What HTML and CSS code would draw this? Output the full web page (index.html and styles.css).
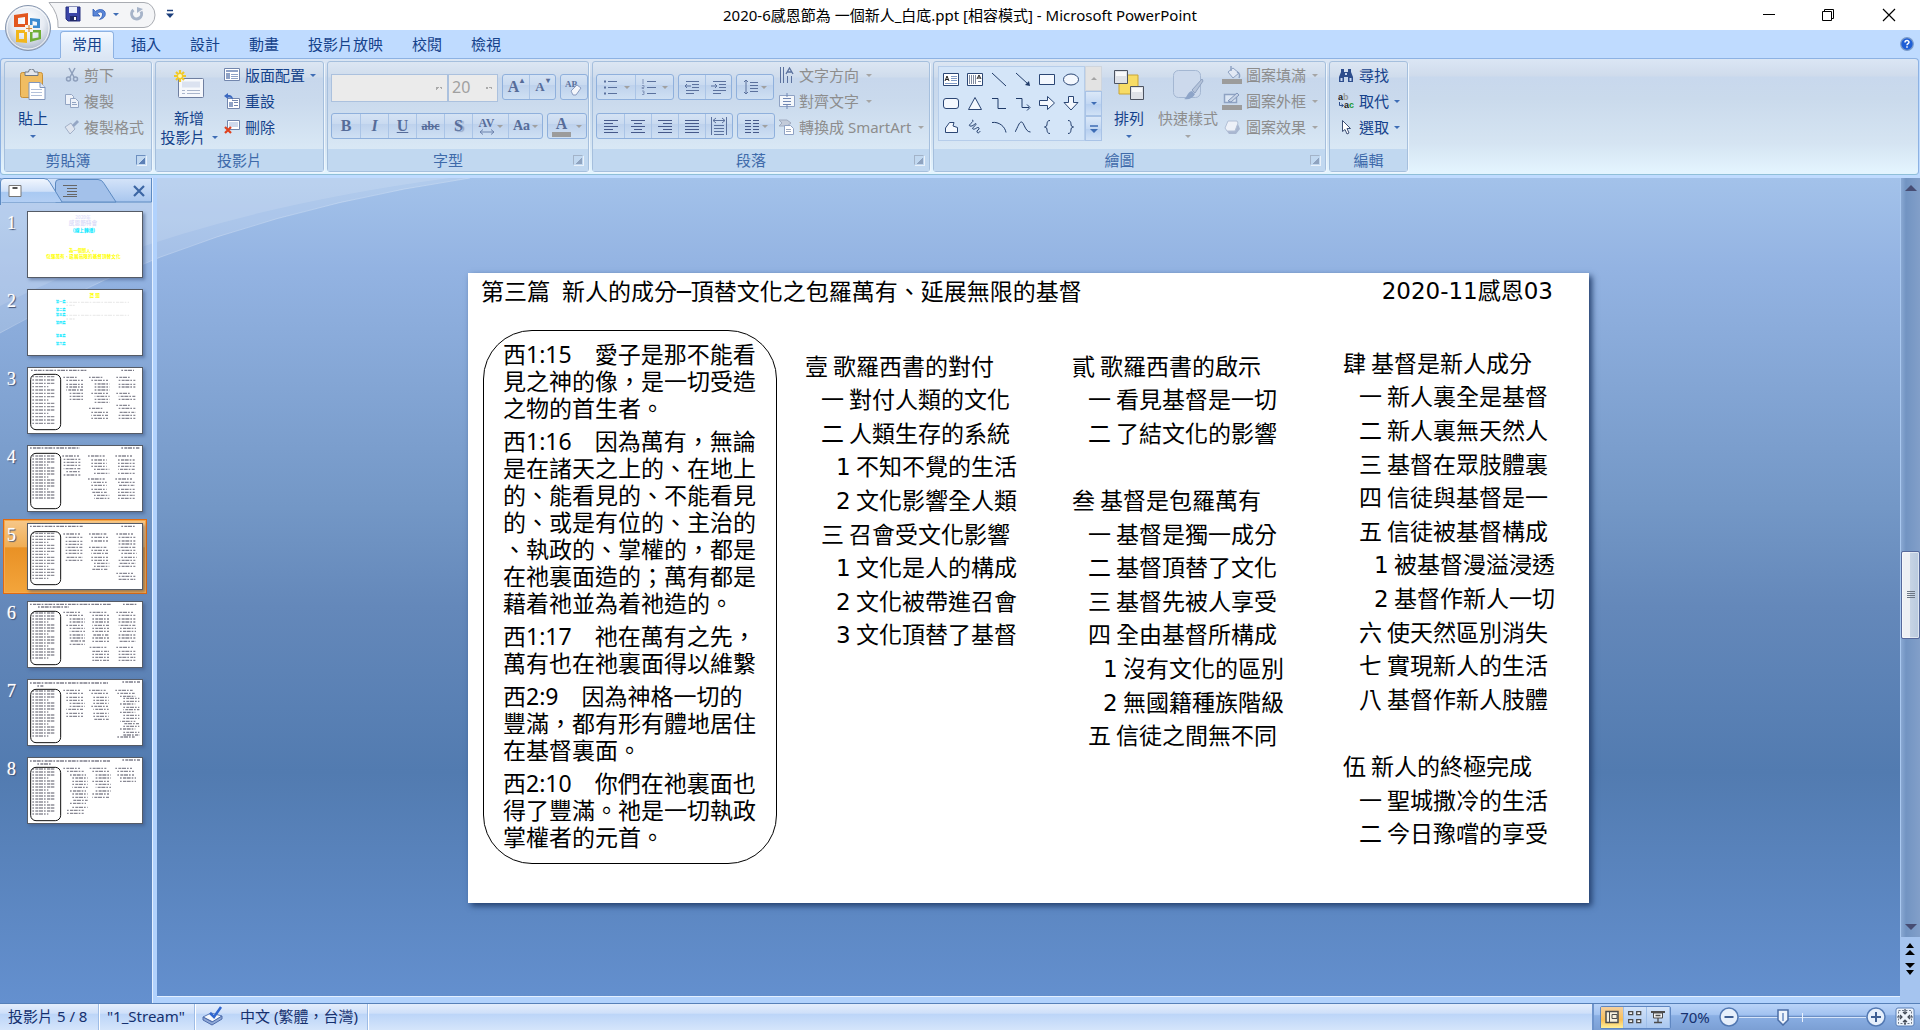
FILE: index.html
```html
<!DOCTYPE html>
<html lang="zh-Hant">
<head>
<meta charset="utf-8">
<title>2020-6感恩節為 一個新人_白底.ppt [相容模式] - Microsoft PowerPoint</title>
<link rel="stylesheet" href="styles.css">
</head>
<body>
<header class="titlebar">
  <div class="quick">
    <svg class="quick-shape" width="110" height="28" viewBox="0 0 110 28"><path d="M1 2.500H96a11 12.500 0 0 1 0 25H10Q11 14 1 2.500z" fill="#f4f5f7" stroke="#a9acb2"/></svg>
    <button class="ic save" aria-label="儲存檔案"><svg width="16" height="16" viewBox="0 0 16 16"><path d="M1 1h14v14H3L1 13z" fill="#3c46a8" stroke="#27307e"/><path d="M4 1h8v6H4z" fill="#eef2fb"/><path d="M5 10h7v5H5z" fill="#222a66"/><path d="M9 11h2v3H9z" fill="#fff"/></svg></button>
    <button class="ic undo" aria-label="復原"><svg width="16" height="16" viewBox="0 0 16 16"><path d="M2 3v7h7L6.500 7.500C9 5 12 6 11.500 9c-.3 2-1.500 3-3 4.500 4-1 6-3 5.800-6C14 3.500 8.500 2 4.500 5.500z" fill="#5a86d8" stroke="#2f5cb5" stroke-width=".8"/></svg></button>
    <button class="ic" aria-label="復原清單"><i class="caret"></i></button>
    <button class="ic redo" aria-label="取消復原"><svg width="16" height="16" viewBox="0 0 16 16"><path d="M4.500 4A5 5 0 1 0 12 5.500" fill="none" stroke="#a7b4c9" stroke-width="3"/><path d="M8 1v6l6-4z" fill="#a7b4c9"/></svg></button>
    <button class="ic custom" aria-label="自訂快速存取工具列"><svg width="8" height="10" viewBox="0 0 8 10"><path d="M1 1.500h6" stroke="#1c3f7c" stroke-width="1.500"/><path d="M0 4.500h8L4 9z" fill="#1c3f7c"/></svg></button>
  </div>
  <h1 class="title">2020-6感恩節為 一個新人_白底.ppt [相容模式] - Microsoft PowerPoint</h1>
  <div class="winctl">
    <button aria-label="最小化"><svg width="14" height="14" viewBox="0 0 14 14"><path d="M1 6.500h12" stroke="#000"/></svg></button>
    <button aria-label="還原"><svg width="14" height="14" viewBox="0 0 14 14" fill="none" stroke="#000"><path d="M1.500 3.500h9v9h-9zM3.500 3V1.500h9v9H11"/></svg></button>
    <button aria-label="關閉"><svg width="14" height="14" viewBox="0 0 14 14" stroke="#000" stroke-width="1.200"><path d="M1 1l12 12M13 1L1 13"/></svg></button>
  </div>
  <button class="office" aria-label="Office 按鈕">
    <svg width="48" height="48" viewBox="0 0 48 48">
      <defs><radialGradient id="orb" cx=".5" cy=".35" r=".65"><stop offset="0" stop-color="#fff"/><stop offset=".55" stop-color="#e6ebf3"/><stop offset="1" stop-color="#aab6c9"/></radialGradient></defs>
      <circle cx="24" cy="24" r="22.500" fill="url(#orb)" stroke="#8494ad"/>
      <circle cx="24" cy="24" r="21" fill="none" stroke="#fff" stroke-opacity=".8"/>
      <path d="M10 11l14-2v14H10zM14 14v6h7v-7z" fill="#e2571f" fill-rule="evenodd"/>
      <path d="M26 14l10 1v9H26zM28.500 17v4.500H33V18z" fill="#3b8ad0" fill-rule="evenodd"/>
      <path d="M12 26h11v13l-11-1zM15 29v6h5v-6z" fill="#f2b61c" fill-rule="evenodd"/>
      <path d="M26 26h11v9l-11 3zM28.500 28.500v6l6-1v-5z" fill="#6fae36" fill-rule="evenodd"/>
      <path d="M21 21h8v7h-8z" fill="#f7f3ea"/><path d="M22 24.500h6M25 21v7" stroke="#d98a3a" stroke-width="1.200"/>
    </svg>
  </button>
</header>

<nav class="tabs" aria-label="功能區索引標籤">
  <button class="tab on">常用</button><button class="tab">插入</button><button class="tab">設計</button><button class="tab">動畫</button><button class="tab">投影片放映</button><button class="tab">校閱</button><button class="tab">檢視</button>
  <button class="help" aria-label="說明"><svg width="14" height="14" viewBox="0 0 14 14"><circle cx="7" cy="7" r="6.300" fill="#1f5fd6" stroke="#7c9cc9" stroke-width="1.200"/><path d="M5 5.500C5 3 9 3 9 5.300 9 6.700 7 6.700 7 8.300M7 9.300v1.500" fill="none" stroke="#fff" stroke-width="1.500"/></svg></button>
</nav>

<div class="ribbon">
  <section class="group g-clip">
    <div class="body">
      <button class="big"><svg width="30" height="32" viewBox="0 0 30 32"><rect x="2.500" y="3.500" width="22" height="25" rx="2" fill="#f0bd62" stroke="#c78f38"/><path d="M7 6.500h13V3h-3.500a3 3 0 0 0-6 0H7z" fill="#e3e6ec" stroke="#6f7885"/><path d="M11 13.500h11l5 5v12H11z" fill="#fff" stroke="#7f95bd"/><path d="M22 13.500v5h5" fill="#dfe7f5" stroke="#7f95bd"/><path d="M13 20.500h11M13 23.500h11M13 26.500h11" stroke="#b3c1da"/></svg><span>貼上</span><i class="caret"></i></button>
      <div class="stack">
        <button class="sm off"><svg width="16" height="16" viewBox="0 0 16 16" fill="none" stroke="#8e9fbb" stroke-width="1.500"><path d="M5 1l5 9M11 1L6 10"/><circle cx="4.500" cy="12" r="2"/><circle cx="11.500" cy="12" r="2"/></svg>剪下</button>
        <button class="sm off"><svg width="16" height="16" viewBox="0 0 16 16" fill="#eef2f9" stroke="#93a5c3"><path d="M1.500 1.500h6l2 2v8h-8z"/><path d="M6.500 5.500h5l3 3v6h-8z"/><path d="M8 9.500h4M8 11.500h5"/></svg>複製</button>
        <button class="sm off"><svg width="16" height="16" viewBox="0 0 16 16"><path d="M1 8l6-4 4 6-5 5z" fill="#dfe5ef" stroke="#a3b1c8"/><path d="M8 6l5-5 2 2-5 5z" fill="#94a6c4"/></svg>複製格式</button>
      </div>
    </div>
    <footer><span>剪貼簿</span><button class="launch dark" aria-label="剪貼簿設定"></button></footer>
  </section>

  <section class="group g-slide">
    <div class="body">
      <button class="big wide"><svg width="32" height="32" viewBox="0 0 32 32"><rect x="5.500" y="9.500" width="25" height="19" rx="1" fill="#f6f8fc" stroke="#6f7fa0"/><path d="M9 12.500h18v6H9z" fill="#dbe2f0"/><path d="M9 21.500h3M14 21.500h13M9 24.500h3M14 24.500h13" stroke="#aab6cc"/><path d="M7 1v12M1 7h12M3 3l8 8M11 3l-8 8" stroke="#f2c928" stroke-width="2.200"/><circle cx="7" cy="7" r="2" fill="#fff8b8"/></svg><span>新增</span><span>投影片<i class="caret"></i></span></button>
      <div class="stack">
        <button class="sm"><svg width="16" height="16" viewBox="0 0 16 16"><path d="M.5 1.500h15v12H.5z" fill="#fff" stroke="#7286ad"/><path d="M2 3h12v2H2zM2 6h4v6H2z" fill="#8fa2c6"/><path d="M7 7.500h7M7 9.500h7M7 11.500h7" stroke="#8fa2c6"/></svg>版面配置<i class="caret"></i></button>
        <button class="sm"><svg width="16" height="16" viewBox="0 0 16 16"><path d="M3.500 5.500h12v10h-12z" fill="#fff" stroke="#7286ad"/><path d="M5 9h4v5H5z" fill="#8fa2c6"/><path d="M10 9.500h4M10 12.500h4M8 7.500h6" stroke="#7286ad"/><path d="M0 3l4-3v2c4 0 5 2 5 5-1-2-2-2.500-5-2.500V6z" fill="#3c69c0"/></svg>重設</button>
        <button class="sm"><svg width="16" height="16" viewBox="0 0 16 16"><path d="M3.500 1.500h12v9h-12z" fill="#fff" stroke="#7286ad"/><path d="M5 3h9v5H5z" fill="#cfd9ec"/><path d="M1 8l6 6M7 8l-6 6" stroke="#e0401c" stroke-width="2.200"/></svg>刪除</button>
      </div>
    </div>
    <footer><span>投影片</span></footer>
  </section>

  <section class="group g-font">
    <div class="body rows">
      <div class="row">
        <select class="combo face" aria-label="字型" disabled><option></option></select><select class="combo size" aria-label="字型大小" disabled><option>20</option></select>
        <div class="set"><button class="t26 ser" aria-label="放大字型">A<sup>▴</sup></button><button class="t26 ser smalla" aria-label="縮小字型">A<sup>▾</sup></button></div>
        <div class="set"><button class="t26" aria-label="清除格式"><svg width="18" height="18" viewBox="0 0 18 18"><text x="0" y="9" font-size="9" font-weight="bold" font-family="Liberation Serif, serif" fill="#5b719d">AB</text><path d="M6 13l6-6 4 3-5 7H8z" fill="#f4f6fb" stroke="#8a9cc0"/></svg></button></div>
      </div>
      <div class="row">
        <div class="set"><button class="t28 ser"><b>B</b></button><button class="t28 ser"><em>I</em></button><button class="t28 ser"><u>U</u></button><button class="t28 ser small"><s>abc</s></button><button class="t28 ser shade">S</button><button class="t36 ser small" aria-label="字元間距"><span class="av">AV<svg width="16" height="6" viewBox="0 0 16 6"><path d="M1 3h14M4 .5L1 3l3 2.500M12 .5L15 3l-3 2.500" fill="none" stroke="#6d83ad"/></svg></span><i class="caret"></i></button><button class="t34 ser mid">Aa<i class="caret"></i></button></div>
        <div class="set"><button class="t38 ser" aria-label="字型色彩"><span class="clr">A</span><i class="caret"></i></button></div>
      </div>
    </div>
    <footer><span>字型</span><button class="launch" aria-label="字型設定"></button></footer>
  </section>

  <section class="group g-para">
    <div class="body">
      <div class="rows">
        <div class="row">
          <div class="set"><button class="t38" aria-label="項目符號"><svg width="16" height="16" viewBox="0 0 16 16" stroke="#5b719d"><path d="M5 2.500h9M5 8.500h9M5 14.500h9"/><path d="M1 2.500h2M1 8.500h2M1 14.500h2" stroke-width="2"/></svg><i class="caret"></i></button><button class="t38" aria-label="編號"><svg width="16" height="16" viewBox="0 0 16 16" stroke="#5b719d"><path d="M6 2.500h9M6 8.500h9M6 14.500h9"/><path d="M2 0v5M1 6.500h2v2H1v1h2M1 12h2v3.500H1M2 13.500h1" fill="none" stroke="#8497bb"/></svg><i class="caret"></i></button></div>
          <div class="set"><button class="t26" aria-label="減少清單階層"><svg width="16" height="16" viewBox="0 0 16 16" stroke="#5b719d"><path d="M2 2.500h13M8 5.500h7M8 8.500h7M2 11.500h13M2 14.500h8"/><path d="M7 7H1l2-2M1 7l2 2" fill="none"/></svg></button><button class="t26" aria-label="增加清單階層"><svg width="16" height="16" viewBox="0 0 16 16" stroke="#5b719d"><path d="M2 2.500h13M8 5.500h7M8 8.500h7M2 11.500h13M2 14.500h8"/><path d="M0 7h6L4 5M6 7L4 9" fill="none"/></svg></button></div>
          <div class="set"><button class="t36" aria-label="行距"><svg width="16" height="16" viewBox="0 0 16 16" fill="none" stroke="#5b719d"><path d="M7 3.500h8M7 6.500h8M7 9.500h8M7 12.500h8M3 1v14M1 3l2-2 2 2M1 13l2 2 2-2"/></svg><i class="caret"></i></button></div>
        </div>
        <div class="row">
          <div class="set"><button class="t27" aria-label="靠左"><svg width="16" height="14" viewBox="0 0 16 14" stroke="#46598a"><path d="M1 1.500h14M1 4.500h9M1 7.500h14M1 10.500h9M1 13.500h14"/></svg></button><button class="t27" aria-label="置中"><svg width="16" height="14" viewBox="0 0 16 14" stroke="#46598a"><path d="M1 1.500h14M4 4.500h8M1 7.500h14M4 10.500h8M1 13.500h14"/></svg></button><button class="t27" aria-label="靠右"><svg width="16" height="14" viewBox="0 0 16 14" stroke="#46598a"><path d="M1 1.500h14M6 4.500h9M1 7.500h14M6 10.500h9M1 13.500h14"/></svg></button><button class="t27" aria-label="左右對齊"><svg width="16" height="14" viewBox="0 0 16 14" stroke="#46598a"><path d="M1 1.500h14M1 4.500h14M1 7.500h14M1 10.500h14M1 13.500h14"/></svg></button><button class="t27" aria-label="分散對齊"><svg width="18" height="18" viewBox="0 0 18 18" fill="none" stroke="#5b719d"><path d="M1.500 0v18M16.500 0v18M3 3.500h12M6 1L3 3.500 6 6M12 1l3 2.500L12 6M4 8.500h10M4 11.500h10M4 14.500h10M4 17.500h10"/></svg></button></div>
          <div class="set"><button class="t36" aria-label="欄"><svg width="16" height="14" viewBox="0 0 16 14" stroke="#46598a"><path d="M1 1.500h6M9 1.500h6M1 4.500h6M9 4.500h6M1 7.500h6M9 7.500h6M1 10.500h6M9 10.500h6M1 13.500h6M9 13.500h6"/></svg><i class="caret"></i></button></div>
        </div>
      </div>
      <div class="stack">
        <button class="sm off"><svg width="16" height="16" viewBox="0 0 16 16" stroke="#5b719d" fill="none"><path d="M1.500 0v16M4.500 0v16M8.500 9v7M12.500 9v7"/><path d="M7 7l3.500-6L14 7M8.500 5h4" stroke-width="1.300"/></svg>文字方向<i class="caret"></i></button>
        <button class="sm off"><svg width="16" height="16" viewBox="0 0 16 16"><path d="M.5 2.500h15v11H.5z" fill="#f4f7fb" stroke="#8fa2c4"/><path d="M4 5.500h8M4 8.500h8M4 11.500h8M8 0v4M8 12v4" stroke="#7187b3"/></svg>對齊文字<i class="caret"></i></button>
        <button class="sm off"><svg width="16" height="16" viewBox="0 0 16 16"><path d="M0 1h8l4 3-4 3H0l3-3z" fill="#c3cbd9" stroke="#a0abc0"/><path d="M5.500 6.500h6l3 3v6h-9z" fill="#fff" stroke="#8fa2c4"/><path d="M7 10.500h5M7 12.500h5" stroke="#a0abc0"/></svg>轉換成 SmartArt<i class="caret"></i></button>
      </div>
    </div>
    <footer><span>段落</span><button class="launch" aria-label="段落設定"></button></footer>
  </section>

  <section class="group g-draw">
    <div class="body">
      <div class="gallery">
        <div class="shapes">
          <button aria-label="文字方塊"><svg viewBox="0 0 16 16"><path d="M.5 2.500h15v12H.5z" fill="#fff" stroke="#2b4674"/><path d="M2 10l2-5 2 5M3 8.500h2" fill="none" stroke="#222"/><path d="M8 5.500h6M8 7.500h6M8 9.500h6M2 12.500h12" stroke="#7f9ac6"/></svg></button>
          <button aria-label="垂直文字方塊"><svg viewBox="0 0 16 16"><path d="M.5 2.500h15v12H.5z" fill="#fff" stroke="#2b4674"/><path d="M10 8l2-4 2 4M11 7h2" fill="none" stroke="#222"/><path d="M2.500 4v9M4.500 4v9M6.500 4v9M8.500 4v9M11 10.500h3" stroke="#7f8aa0"/></svg></button>
          <button aria-label="直線"><svg viewBox="0 0 16 16"><path d="M1 2l14 13" stroke="#1f3a68"/></svg></button>
          <button aria-label="箭頭"><svg viewBox="0 0 16 16"><path d="M1 2l12 11" stroke="#1f3a68"/><path d="M15 15l-5-1 4-4z" fill="#1f3a68"/></svg></button>
          <button aria-label="矩形"><svg viewBox="0 0 16 16"><path d="M.5 3.500h15v10H.5z" class="shp"/></svg></button>
          <button aria-label="橢圓"><svg viewBox="0 0 16 16"><ellipse cx="8" cy="8.500" rx="7.500" ry="5.500" class="shp"/></svg></button>
          <button aria-label="圓角矩形"><svg viewBox="0 0 16 16"><rect x=".5" y="3.500" width="15" height="10" rx="2.500" class="shp"/></svg></button>
          <button aria-label="三角形"><svg viewBox="0 0 16 16"><path d="M8 2.500l6.500 12h-13z" class="shp"/></svg></button>
          <button aria-label="肘形接點"><svg viewBox="0 0 16 16"><path d="M1 3.500h6v10h8" class="ln"/></svg></button>
          <button aria-label="肘形箭頭接點"><svg viewBox="0 0 16 16"><path d="M1 3.500h6v9h7M12 9.500l3 3-3 3" class="ln"/></svg></button>
          <button aria-label="向右箭號"><svg viewBox="0 0 16 16"><path d="M.5 5.500h8v-4l7 6.500-7 6.500v-4h-8z" class="shp"/></svg></button>
          <button aria-label="向下箭號"><svg viewBox="0 0 16 16"><path d="M5.500 1.500h5v6h4.500L8 15 1 7.500h4.500z" class="shp"/></svg></button>
          <button aria-label="手繪多邊形"><svg viewBox="0 0 16 16"><path d="M2.500 13.500V9l4-5.500h4.500l-1 3.500 4.500 1.500v5z" class="shp"/></svg></button>
          <button aria-label="徒手畫"><svg viewBox="0 0 16 16"><path d="M5 1c4 1-5 5-2 6s6-4 6-2-5 4-3 5 5-3 6-1-3 2-2 4 3 0 3-1" class="ln"/></svg></button>
          <button aria-label="弧形"><svg viewBox="0 0 16 16"><path d="M1 3.500c7-1 13 4 14 10" class="ln"/></svg></button>
          <button aria-label="曲線"><svg viewBox="0 0 16 16"><path d="M0 13C3 8 4 3 6.500 3S10 13 15.500 13" class="ln"/></svg></button>
          <button aria-label="左大括弧"><svg viewBox="0 0 16 16"><path d="M11 1.500C6 1.500 10 8 5.500 8 10 8 6 14.500 11 14.500" class="ln"/></svg></button>
          <button aria-label="右大括弧"><svg viewBox="0 0 16 16"><path d="M5 1.500C10 1.500 6 8 10.500 8 6 8 10 14.500 5 14.500" class="ln"/></svg></button>
        </div>
        <div class="gscroll"><button class="dis" aria-label="上一列"><i class="caret up"></i></button><button aria-label="下一列"><i class="caret"></i></button><button aria-label="其他"><svg width="8" height="8" viewBox="0 0 8 8"><path d="M0 1h8" stroke="#3e6db5" stroke-width="1.500"/><path d="M0 4h8L4 8z" fill="#3e6db5"/></svg></button></div>
      </div>
      <button class="big"><svg width="32" height="32" viewBox="0 0 32 32"><path d="M6 6h19v19H6z" fill="#f7dc66" stroke="#c9a536"/><path d="M1.500 1.500h13v13h-13zM17.500 17.500h13v13h-13z" fill="#dfe2e8" stroke="#4c5361"/><path d="M3 3h10v4H3zM19 19h10v4H19z" fill="#f8f9fb"/></svg><span>排列</span><i class="caret"></i></button>
      <button class="big off q"><svg width="32" height="32" viewBox="0 0 32 32"><rect x="1.500" y="1.500" width="27" height="27" rx="5" fill="#ccd9ec" stroke="#a4b7d2"/><path d="M30 10L20 21l3 3 8-12z" fill="#b4c3da" stroke="#8fa2c0"/><path d="M12 30c3-1 3-7 8-8l3 3c-2 4-6 6-11 5z" fill="#8da4c8"/></svg><span>快速樣式</span><i class="caret"></i></button>
      <div class="stack">
        <button class="sm off w"><svg width="20" height="18" viewBox="0 0 20 18"><path d="M6 6l5-4 6 5-6 5z" fill="#e2e9f4" stroke="#8ea2c2"/><path d="M15 6c3 1 3 4 2 6M9 0v5" fill="none" stroke="#8ea2c2" stroke-width="1.500"/><path d="M0 13h20v5H0z" fill="#9c9c9c"/></svg>圖案填滿<i class="caret"></i></button>
        <button class="sm off w"><svg width="20" height="18" viewBox="0 0 20 18"><path d="M2.500 2.500h12v8h-12z" fill="#dbe6f4" stroke="#8ea2c2" stroke-width="1.500"/><path d="M6 9l9-8 2 2-8 7z" fill="#c6d2e5" stroke="#8196ba"/><path d="M0 13h20v5H0z" fill="#9c9c9c"/></svg>圖案外框<i class="caret"></i></button>
        <button class="sm off w"><svg width="20" height="18" viewBox="0 0 20 18"><path d="M4 12l3 4h7l4-5-2-5z" fill="#a9b7d0"/><path d="M3 10l3-7h9l1 2-3 8H5z" fill="#edf1f8" stroke="#b3c0d6"/></svg>圖案效果<i class="caret"></i></button>
      </div>
    </div>
    <footer><span>繪圖</span><button class="launch" aria-label="繪圖設定"></button></footer>
  </section>

  <section class="group g-edit">
    <div class="body">
      <div class="stack">
        <button class="sm"><svg width="16" height="16" viewBox="0 0 16 16"><path d="M3 2h3v3h4V2h3v3l2 5v5h-5v-5H6v5H1v-5l2-5z" fill="#2d4d8c"/><path d="M2.500 11h2v3h-2zM11.500 11h2v3h-2zM7 6h2v2H7z" fill="#c8d8f2"/></svg>尋找</button>
        <button class="sm"><svg width="16" height="16" viewBox="0 0 16 16" font-family="Liberation Sans, sans-serif" font-weight="bold" font-size="9"><text x="0" y="7" fill="#222">a</text><text x="5" y="7" fill="#999">b</text><text x="6" y="15" fill="#222">a</text><text x="11" y="15" fill="#1d9a32">c</text><path d="M1.500 9v3.500H5M3.500 11l2 1.500-2 1.500" fill="none" stroke="#2d4d8c"/></svg>取代<i class="caret"></i></button>
        <button class="sm"><svg width="16" height="16" viewBox="0 0 16 16"><path d="M4.500 1.500v11l2.500-2 2 4.500 2-1-2-4.500h3.500z" fill="#fff" stroke="#3d4f74"/></svg>選取<i class="caret"></i></button>
      </div>
    </div>
    <footer><span>編輯</span></footer>
  </section>
</div>

<main class="work">
  <svg class="swoosh" width="480" height="170" viewBox="0 0 480 170"><path d="M0 0H470Q200 40 0 155z" fill="#fff" fill-opacity=".16"/><path d="M0 0H450Q180 36 0 128z" fill="#fff" fill-opacity=".12"/><path d="M470 0Q200 40 0 155" fill="none" stroke="#fff" stroke-opacity=".25"/></svg>
  <aside class="pane">
    <div class="panetabs">
      <svg class="paneshape" width="152" height="27" viewBox="0 0 152 27">
        <defs><linearGradient id="pt" x1="0" y1="0" x2="0" y2="1"><stop offset="0" stop-color="#f2f7ff"/><stop offset=".5" stop-color="#cfe0f8"/><stop offset=".55" stop-color="#a9c9f2"/><stop offset="1" stop-color="#b5d0f4"/></linearGradient><linearGradient id="pb" x1="0" y1="0" x2="0" y2="1"><stop offset="0" stop-color="#d5e4f9"/><stop offset="1" stop-color="#a8c6ee"/></linearGradient></defs>
        <path d="M0 0h151.500v24H0z" fill="url(#pb)" stroke="#5c8ac2"/>
        <path d="M55.500 24V5q0-3.500 3.500-3.500H98q4 0 6 4l12 18.500z" fill="#a3c1ea" stroke="#5c8ac2"/>
        <path d="M.5 26V4q0-3.500 3.500-3.500H44q4 0 6 4L62 24H2z" fill="url(#pt)"/><path d="M.5 27V4q0-3.500 3.500-3.500H44q4 0 6 4L62 24" fill="none" stroke="#5c8ac2"/>
      </svg>
      <button aria-label="投影片"><svg width="14" height="14" viewBox="0 0 14 14"><path d="M1 1.500h12v11H1z" fill="#fff" stroke="#777"/><path d="M4.500 4h5" stroke="#555" stroke-width="2"/></svg></button>
      <button aria-label="大綱"><svg width="14" height="14" viewBox="0 0 14 14" stroke="#666"><path d="M0 1.500h14M4 4.500h10M4 7.500h10M4 10.500h10M0 12.500h14"/></svg></button>
      <button class="x" aria-label="關閉窗格"><svg width="14" height="14" viewBox="0 0 14 14" stroke="#3c66a4" stroke-width="2.200"><path d="M2 2l10 10M12 2L2 12"/></svg></button>
    </div>
    <ol class="thumbs" id="thumbs"></ol>
  </aside>
  <div class="splitter"></div>
  <section class="stage">
    <article class="slide">
      <header><h2>第三篇  新人的成分─頂替文化之包羅萬有、延展無限的基督</h2><p class="code">2020-11感恩03</p></header>
      <div class="cols">
        <div class="verses">
          <p>西1:15　愛子是那不能看<br>見之神的像，是一切受造<br>之物的首生者。</p>
          <p>西1:16　因為萬有，無論<br>是在諸天之上的、在地上<br>的、能看見的、不能看見<br>的、或是有位的、主治的<br>、執政的、掌權的，都是<br>在祂裏面造的；萬有都是<br>藉着祂並為着祂造的。</p>
          <p>西1:17　祂在萬有之先，<br>萬有也在祂裏面得以維繫</p>
          <p>西2:9　因為神格一切的<br>豐滿，都有形有體地居住<br>在基督裏面。</p>
          <p>西2:10　你們在祂裏面也<br>得了豐滿。祂是一切執政<br>掌權者的元首。</p>
        </div>
        <ul class="outline o9">
          <li class="h"><b>壹</b>歌羅西書的對付</li>
          <li><b>一</b>對付人類的文化</li>
          <li><b>二</b>人類生存的系統</li>
          <li class="n"><b>1</b>不知不覺的生活</li>
          <li class="n"><b>2</b>文化影響全人類</li>
          <li><b>三</b>召會受文化影響</li>
          <li class="n"><b>1</b>文化是人的構成</li>
          <li class="n"><b>2</b>文化被帶進召會</li>
          <li class="n"><b>3</b>文化頂替了基督</li>
        </ul>
        <ul class="outline o12">
          <li class="h"><b>貳</b>歌羅西書的啟示</li>
          <li><b>一</b>看見基督是一切</li>
          <li><b>二</b>了結文化的影響</li>
          <li class="h skip"><b>叁</b>基督是包羅萬有</li>
          <li><b>一</b>基督是獨一成分</li>
          <li><b>二</b>基督頂替了文化</li>
          <li><b>三</b>基督先被人享受</li>
          <li><b>四</b>全由基督所構成</li>
          <li class="n"><b>1</b>沒有文化的區別</li>
          <li class="n"><b>2</b>無國籍種族階級</li>
          <li><b>五</b>信徒之間無不同</li>
        </ul>
        <ul class="outline o15">
          <li class="h"><b>肆</b>基督是新人成分</li>
          <li><b>一</b>新人裏全是基督</li>
          <li><b>二</b>新人裏無天然人</li>
          <li><b>三</b>基督在眾肢體裏</li>
          <li><b>四</b>信徒與基督是一</li>
          <li><b>五</b>信徒被基督構成</li>
          <li class="n"><b>1</b>被基督漫溢浸透</li>
          <li class="n"><b>2</b>基督作新人一切</li>
          <li><b>六</b>使天然區別消失</li>
          <li><b>七</b>實現新人的生活</li>
          <li><b>八</b>基督作新人肢體</li>
          <li class="h skip"><b>伍</b>新人的終極完成</li>
          <li><b>一</b>聖城撒冷的生活</li>
          <li><b>二</b>今日豫嚐的享受</li>
        </ul>
      </div>
    </article>
  </section>
  <div class="vscroll">
    <div class="track">
      <button class="arrow" aria-label="向上捲動"><svg width="12" height="6" viewBox="0 0 12 6"><path d="M0 6L6 0l6 6z" fill="#474d73"/></svg></button>
      <div class="before"></div>
      <div class="knob"><svg width="8" height="8" viewBox="0 0 8 8" stroke="#6c7684"><path d="M0 .5h8M0 2.500h8M0 4.500h8M0 6.500h8"/></svg></div>
      <div class="after"></div>
      <button class="arrow" aria-label="向下捲動"><svg width="12" height="6" viewBox="0 0 12 6"><path d="M0 0l6 6 6-6z" fill="#474d73"/></svg></button>
    </div>
    <button class="jump" aria-label="上一張投影片"><svg width="10" height="12" viewBox="0 0 10 12"><path d="M1 5l4-5 4 5zM0 12l5-5 5 5z"/></svg></button>
    <button class="jump" aria-label="下一張投影片"><svg width="10" height="12" viewBox="0 0 10 12"><path d="M0 0l5 5 5-5zM1 7l4 5 4-5z"/></svg></button>
  </div>
</main>

<footer class="status">
  <span class="cell c1">投影片 5 / 8</span>
  <span class="cell c2">"1_Stream"</span>
  <button class="cell c3"><svg width="22" height="20" viewBox="0 0 22 20"><path d="M1 11l8-4 11 3-9 6z" fill="#f4f7fc" stroke="#5a78b4"/><path d="M1 11v3l9 5 10-6v-3l-10 6z" fill="#8fa8d6" stroke="#4e6dac"/><path d="M8 7l4 4 7-10" fill="none" stroke="#2f66d0" stroke-width="2.500"/></svg><span>中文 (繁體，台灣)</span></button>
  <span class="fill"></span>
  <div class="right">
    <div class="views">
      <button class="on" aria-label="標準模式"><svg width="14" height="14" viewBox="0 0 14 14"><path d="M1 1.500h12v11H1z" fill="#f7f1df" stroke="#4c4c4c" stroke-width="1.500"/><path d="M4.500 2v10M7 4.500h5v4H7z" fill="none" stroke="#4c4c4c"/></svg></button>
      <button aria-label="投影片瀏覽"><svg width="14" height="14" viewBox="0 0 14 14" fill="#f4f4f4" stroke="#4c4c4c" stroke-width="1.300"><path d="M.7 1.700h4v3h-4zM8.700 1.700h4v3h-4zM.7 9.700h4v3h-4zM8.700 9.700h4v3h-4z"/></svg></button>
      <button aria-label="投影片放映"><svg width="14" height="14" viewBox="0 0 14 14"><path d="M0 2h14" stroke="#4c4c4c" stroke-width="2"/><path d="M2.500 3h9v5h-9z" fill="#f4f4f4" stroke="#4c4c4c"/><path d="M7 8v4M3 12.500h8M4.500 5.500h5" stroke="#4c4c4c" stroke-width="1.300"/></svg></button>
    </div>
    <button class="pct">70%</button>
    <button class="rnd" aria-label="縮小"><svg width="20" height="20" viewBox="0 0 20 20"><circle cx="10" cy="10" r="9" fill="#e6effb" stroke="#5379b3" stroke-width="1.500"/><path d="M5.500 10h9" stroke="#3f5f93" stroke-width="2"/></svg></button>
    <input class="zoom" type="range" min="0" max="100" value="33" aria-label="顯示比例">
    <button class="rnd" aria-label="放大"><svg width="20" height="20" viewBox="0 0 20 20"><circle cx="10" cy="10" r="9" fill="#e6effb" stroke="#5379b3" stroke-width="1.500"/><path d="M5 10h10M10 5v10" stroke="#3f5f93" stroke-width="2"/></svg></button>
    <button class="rnd fit" aria-label="調整至視窗"><svg width="20" height="20" viewBox="0 0 20 20"><rect x="1" y="1" width="18" height="18" rx="2" fill="#edf3fb" stroke="#5b80b8"/><rect x="3.500" y="3.500" width="13" height="13" fill="none" stroke="#6c7685" stroke-dasharray="2 1.500"/><path d="M10 2v5M8 5l2 2 2-2M10 18v-5M8 15l2-2 2 2M2 10h5M5 8l2 2-2 2M18 10h-5M15 8l-2 2 2 2" fill="none" stroke="#434b58" stroke-width="1.200"/></svg></button>
  </div>
</footer>
<script src="thumbs.js"></script>
</body>
</html>
```
FILE: styles.css
```css
* { box-sizing: border-box; }
body {
  margin: 0; min-height: 100vh; display: flex; flex-direction: column;
  font: 15px/20px "Noto Sans", "Noto Sans CJK TC", sans-serif; color: #15428b; background: #bfdbff;
}
button { font: inherit; color: inherit; background: none; border: 0; padding: 0; margin: 0; display: inline-flex; align-items: center; justify-content: center; white-space: nowrap; }
svg { display: block; flex: none; }
h1, h2, p, ul, ol { margin: 0; padding: 0; font-weight: 400; }
ul, ol { list-style: none; }
.caret { flex: none; width: 0; height: 0; border: 3px solid transparent; border-top-color: #3e6db5; border-bottom: 0; }
.caret.up { border-bottom: 3px solid #a5a5a5; border-top: 0; }
.off { color: #8d8d8d; }
.off .caret { border-top-color: #a5a5a5; }

/* title bar */
.titlebar { position: relative; height: 30px; background: #fff; display: grid; grid-template-columns: 1fr auto 1fr; align-items: center; }
.quick { position: relative; display: flex; align-items: center; height: 30px; padding: 0 0 2px 65px; }
.quick-shape { position: absolute; left: 48px; top: 0; }
.ic { position: relative; }
.undo { margin-left: 10px; }
.undo + .ic { margin: 0 10px 0 6px; }
.custom { margin-left: 21px; }
.title { font-size: 15px; line-height: 30px; color: #000; white-space: pre; }
.winctl { display: flex; justify-content: flex-end; }
.winctl button { width: 59px; height: 28px; }
.winctl button:last-child { width: 63px; }
.office { position: absolute; left: 4px; top: 4px; z-index: 3; }

/* ribbon tabs */
.tabs { height: 28px; display: flex; align-items: flex-end; gap: 5px; padding: 0 6px 0 60px; background: #bfdbff; }
.tab { height: 27px; padding: 0 12px 2px; }
.tab.on { background: linear-gradient(#f4f9ff, #e4eefb 50%, #dbe6f4); box-shadow: inset 0 1px #8db2e3, inset 1px 0 #8db2e3, inset -1px 0 #8db2e3, 0 2px #dbe6f4; border-radius: 4px 4px 0 0; z-index: 1; }
.help { margin-left: auto; height: 28px; }

/* ribbon */
.ribbon {
  height: 117px; margin: 0 1px 3px 0; display: flex; gap: 3px; padding: 2px 4px 2px 3px;
  border: 1px solid #8db2e3; border-bottom-color: #8fbfd8; border-radius: 4px;
  background: linear-gradient(#dbe6f4, #cfdbec 17px, #c8d8ed 18px, #cadaec 40px, #d5e4f2 84px, #e3f4fe 113px);
}
.group { display: flex; flex-direction: column; border: 1px solid #a5bfdd; border-radius: 3px; box-shadow: 1px 1px 0 #eef6fd; background: linear-gradient(#dce6f3, #cfdcec 15px, #c7d7ec 16px, #cadaed 40px, #d9e8f5 88px); }
.g-clip { width: 148px; } .g-slide { width: 169px; } .g-font { width: 262px; } .g-para { width: 338px; } .g-draw { width: 393px; } .g-edit { width: 79px; }
.body { flex: 1; display: flex; min-height: 0; }
.group footer { height: 22px; display: flex; align-items: center; background: #c1d8f0; color: #3e6aaa; }
.group footer span { flex: 1; text-align: center; }
.launch { position: relative; width: 20px; height: 20px; }
.launch::before { content: ""; width: 8px; height: 8px; border: 1px solid #a3b3c8; border-right-color: transparent; border-bottom-color: transparent; box-shadow: 1px 1px #e9f1fa; background: linear-gradient(135deg, transparent 60%, #8fa3bf 60%); }
.launch.dark::before { border-color: #6d8fbf transparent transparent #6d8fbf; background: linear-gradient(135deg, transparent 60%, #5c80b6 60%); }

.big { flex-direction: column; justify-content: flex-start; padding-top: 7px; width: 46px; height: 86px; }
.big span { line-height: 19px; display: flex; align-items: center; }
.big svg { margin-bottom: 8px; }
.big > .caret { margin-top: 7px; }
.wide { width: 60px; }
.wide .caret { margin-left: 6px; }
.stack { display: flex; flex-direction: column; align-items: flex-start; }
.sm { height: 26px; gap: 4px; }
.g-clip .big { margin-left: 5px; }
.g-clip .stack { padding-left: 8px; }
.g-slide .big { margin-left: 3px; }
.g-slide .stack { padding-left: 5px; }
.g-edit .stack { padding-left: 8px; }
.g-edit .sm, .g-slide .sm { gap: 5px; }

.rows { padding: 12px 0 0 3px; display: flex; flex-direction: column; gap: 13px; }
.row { display: flex; gap: 4px; height: 26px; }
.combo { appearance: none; border: 1px solid #abc1de; border-radius: 0; height: 28px; font: inherit; font-size: 16px; color: #a0a0a0; opacity: 1; padding: 0 0 3px 3px; background: linear-gradient(to bottom left, #aaa 50%, transparent 50%) right 5px center / 3px 3px no-repeat, linear-gradient(to bottom right, #aaa 50%, transparent 50%) right 8px center / 3px 3px no-repeat, #ebebeb; }
.face { width: 117px; margin-right: -4px; }
.size { width: 50px; }
.set { display: flex; border: 1px solid #8fb0dc; border-radius: 3px; background: linear-gradient(#d5e3f4, #c9daf0 40%, #bdd1ec 41%, #cfe0f3); }
.set button { height: 24px; color: #566c99; gap: 5px; }
.set button + button { border-left: 1px solid #aac4e6; }
.set .caret { border-top-color: #a0a0a0; }
.t26 { width: 26px; } .t27 { width: 27px; } .t28 { width: 28px; } .t34 { width: 34px; } .t36 { width: 36px; } .t38 { width: 38px; }
.set .t34, .set .t36 { gap: 2px; }
.set .ser { font-family: "Liberation Serif", serif; font-weight: 700; font-size: 16px; }
.set .ser.smalla { font-size: 13px; }
.set .ser.small { font-size: 12px; }
.set .ser.mid { font-size: 14px; }
.ser sup { font-size: 8px; line-height: 8px; align-self: flex-start; margin: 2px 0 0 -4px; }
.shade { text-shadow: 2px 1px 1px #8ea2c6; }
.av { display: flex; flex-direction: column; align-items: center; line-height: 12px; }
.clr { border-bottom: 5px solid #9c9c9c; padding: 0 4px; line-height: 17px; }
.g-para .stack { padding-left: 4px; }
.g-para .sm .caret { margin-left: 3px; }

.gallery { display: flex; margin: 4px 0 0 4px; height: 75px; }
.shapes { display: grid; grid-template-columns: repeat(6, 24px); grid-template-rows: repeat(3, 24px); width: 147px; background: #d4e5f8; border: 1px solid #b6cdea; }
.shapes svg { width: 16px; height: 16px; }
.shp { fill: #f4f8fe; stroke: #2b4674; }
.ln { fill: none; stroke: #1f3a68; }
.gscroll { display: flex; flex-direction: column; width: 17px; }
.gscroll button { flex: 1; border: 1px solid #a9c3e6; background: linear-gradient(#dbe8f8, #c3d8f3 50%, #b6cff0 51%, #d0e1f6); }
.gscroll .dis { background: #e3e3e3; border-color: #cfd5dd; }
.g-draw .big { width: 54px; }
.g-draw .big.q { width: 64px; }
.g-draw .stack { padding-left: 2px; }
.g-draw .sm .caret { margin-left: 2px; }

/* work area */
.work { position: relative; flex: 1; display: flex; background: linear-gradient(#a3c2ea, #93b3e2 11%, #7397c6 40%, #6488ba 52%, #527bb0 72%, #6490cf); border-bottom: 1px solid #5680b8; }
.swoosh { position: absolute; left: 0; top: 0; }
.pane { position: relative; width: 152px; }
.panetabs { position: relative; height: 29px; display: flex; align-items: flex-start; padding: 6px 6px 0 8px; gap: 41px; }
.panetabs button { position: relative; height: 14px; }
.panetabs .x { margin-left: auto; }
.paneshape { position: absolute; left: 0; top: 0; }
.thumbs { display: flex; flex-direction: column; gap: 3px; padding: 0 5px 0 3px; }
.thumbs li { display: flex; height: 75px; padding: 3px 0 0 3px; border: 1px solid transparent; }
.thumbs li.on { border-color: #e06a10; box-shadow: inset 0 0 0 1px #f7a94a; background: linear-gradient(#f6c88a, #f0ae55 37%, #e99125 38%, #f3a53c); }
.num { width: 20px; font: 18px/24px "Liberation Serif", serif; color: #fff; text-shadow: 1px 1px 1px #3c4d70, 0 0 1px #fff; }
.thumb { width: 116px; height: 67px; border: 1px solid #555b66; background: #fff; box-shadow: 2px 2px 3px #3a527d80; }
.thumb svg { width: 100%; height: 100%; }
.splitter { width: 5px; background: linear-gradient(to right, #e3efff 1px, #b1d2fd 1px); position: relative; }
.stage { position: relative; flex: 1; display: flex; align-items: center; justify-content: center; border-bottom: 6px solid #b1d2fd; box-shadow: inset 0 -1px #e3efff; }

/* slide */
.slide { width: 1121px; min-height: 630px; background: #fff; color: #000; box-shadow: 3px 3px 6px #24406e; font-size: 23px; line-height: 27px; text-spacing-trim: space-all; }
.slide header { display: flex; justify-content: space-between; height: 57px; padding: 4px 36px 0 13px; line-height: 28px; }
.slide h2 { font-size: 23px; white-space: pre; font-family: "Noto Sans", "DejaVu Sans", "Noto Sans CJK TC", sans-serif; }
.code { font-family: "DejaVu Sans", "Noto Sans CJK TC", sans-serif; }
.cols { display: grid; grid-template-columns: 294px 239px 243px 1fr; column-gap: 28px; padding: 0 0 38px 15px; align-items: start; }
.verses { border: 1px solid #000; border-radius: 49px; min-height: 534px; padding: 10px 0 8px 19px; white-space: nowrap; }
.verses p + p { margin-top: 6px; }
.outline { display: grid; grid-auto-rows: 1fr; font-family: "DejaVu Sans", "Noto Sans CJK TC", sans-serif; margin-top: 21px; white-space: nowrap; }
.outline li { display: flex; align-items: center; padding-left: 16px; }
.outline b { font-weight: 400; width: 28px; flex: none; }
.outline .n { padding-left: 31px; }
.outline .n b { width: 20px; }
.outline .h { padding-left: 0; }
.outline .skip { grid-row: span 2; align-items: flex-end; padding-bottom: 3px; }
.o9 { height: 302px; } .o12 { height: 403px; } .o15 { height: 504px; margin-top: 18px; }

/* vertical scroll bar */
.vscroll { position: relative; width: 20px; display: flex; flex-direction: column; background: #a5c4ef; padding-bottom: 24px; }
.track { flex: 1; display: flex; flex-direction: column; border-left: 1px solid #a9c8ef; background: linear-gradient(to right, #8aa9d3, #7294c2 5px, #829fc9); }
.arrow { height: 20px; width: 20px; }
.before { flex: 352; } .after { flex: 277; }
.knob { height: 88px; border: 1px solid #56689a; border-radius: 2px; display: flex; align-items: center; justify-content: center; background: linear-gradient(to right, #eef0f4 45%, #c6d3e4 50%, #b9c9de); box-shadow: inset 0 0 0 1px #fff8; }
.jump { height: 20px; }
.jump:first-of-type { margin-top: 2px; }

/* status bar */
.status { height: 26px; display: flex; background: linear-gradient(#e3edfc, #cfe0f9 35%, #bcd5f8 40%, #d5e5fb); color: #15306e; line-height: 24px; }
.cell { border-right: 1px solid #9ebce6; box-shadow: 1px 0 #fff; white-space: pre; }
.c1 { width: 99px; padding-left: 8px; }
.c2 { width: 96px; padding-left: 8px; }
.c3 { width: 173px; padding: 0 0 2px 7px; gap: 16px; justify-content: flex-start; }
.fill { flex: 1; }
.right { display: flex; align-items: center; padding: 0 5px 0 6px; border-left: 2px solid #6e94cc; background: linear-gradient(#b9d3f8, #a3c3f0 40%, #8aafe4 45%, #7b9fd4); }
.views { display: flex; height: 23px; border: 1px solid #5f87c2; border-radius: 2px; }
.views button { width: 23px; border-right: 1px solid #9fbfe9; background: linear-gradient(#d3e3f9, #a9c7ef); }
.views .on { background: linear-gradient(#f3cfa0, #fbbf55 60%, #fff09a); }
.pct { margin: 0 7px; width: 34px; }
.rnd { width: 20px; height: 20px; }
.fit { margin-left: 9px; }
.zoom { appearance: none; width: 127px; height: 20px; margin: 0; background: linear-gradient(#e9f1fd, #e9f1fd) 63px center / 1px 9px no-repeat, linear-gradient(#6c8fc4 50%, #d7e5f9 50%) center / 100% 2px no-repeat; }
.zoom::-webkit-slider-thumb { appearance: none; width: 12px; height: 17px; background: url("data:image/svg+xml,%3Csvg xmlns='http://www.w3.org/2000/svg' width='12' height='17'%3E%3Cpath d='M1 1h10v10l-5 5-5-5z' fill='%23eef4fc' stroke='%234b6ea6' stroke-width='1.500'/%3E%3Cpath d='M6 4v8' stroke='%238aa5cf' stroke-width='2'/%3E%3C/svg%3E"); }
```
FILE: thumbs.js
```js
// Miniature slides. Each block is [x, width, [row positions]] in a 342 x 195 space.
const range = (from, to, step) => {
  const out = [];
  for (let y = from; y <= to; y += step) out.push(y);
  return out;
};

const slides = [
  { texts: [
    [165, 20, 14, '#e4e4fb', '2020年'],
    [165, 40, 17, '#dcdcf8', '感恩節特會'],
    [168, 60, 14, '#00e8ff', '(線上轉播)'],
    [162, 120, 13, '#ffff00', '為一個新人，'],
    [166, 138, 14, '#ffff00', '包羅萬有、延展無限的基督頂替文化']
  ] },
  { texts: [
    [200, 21, 14, '#ffff00', '篇  題'],
    [98, 40, 10, '#00e8ff', '第一篇'], [98, 63, 10, '#00e8ff', '第二篇'], [98, 78, 10, '#00e8ff', '第三篇'],
    [98, 102, 10, '#00e8ff', '第四篇'], [98, 141, 10, '#00e8ff', '第五篇'], [98, 165, 10, '#00e8ff', '第六篇']
  ], faint: [[115, 188, [37, 76]], [115, 25, [46, 87]]] },
  { head: [[9, 166, [7]], [280, 38, [7]]], box: [19, 166], verse: range(26, 172, 10), rows: [
    [106, 42, [28]], [115, 50, [37, 49, 57, 66]], [125, 40, [76, 85, 94]],
    [183, 42, [28, 121]], [190, 50, [37, 76, 133, 142, 151]], [200, 45, [48, 57, 66, 85, 94, 103]],
    [265, 40, [28, 76, 112]], [272, 50, [37, 49, 57, 85, 94, 121, 133, 142, 151]]] },
  { head: [[6, 150, [6]], [280, 56, [6]]], box: [22, 166], verse: range(30, 160, 9), rows: [
    [103, 50, [30]], [107, 50, [40, 49, 58, 68, 87]], [115, 44, [77]],
    [180, 50, [30, 99]], [190, 46, [42, 52, 61, 109, 118, 130, 139]], [198, 46, [70, 82, 148, 157]],
    [262, 50, [30, 99]], [270, 50, [42, 52, 61, 70, 82, 109, 118, 130, 139, 148, 157]]] },
  { on: true, head: [[6, 160, [7]], [280, 40, [7]]], box: [23, 159], verse: range(28, 170, 9), rows: [
    [106, 50, [30]], [113, 50, [40, 52, 61, 70, 79, 88, 100, 109]],
    [183, 52, [30, 70]], [190, 50, [40, 51, 79, 88, 100, 109, 136]], [198, 46, [118, 127]],
    [265, 50, [30, 148]], [272, 50, [40, 51, 60, 70, 79, 109, 118, 127, 157, 166]], [280, 46, [88, 100]]] },
  { head: [[6, 244, [7]], [285, 40, [7]], [30, 92, [15]]], box: [28, 160], verse: range(33, 168, 9), rows: [
    [106, 50, [31]], [115, 50, [40, 70]], [125, 46, [51, 60, 79, 88, 99, 108, 117, 127]],
    [185, 50, [31, 136]], [193, 50, [40, 51, 60, 70, 79, 88, 99, 108, 118, 148, 157, 166, 175]],
    [265, 50, [31, 136]], [272, 50, [40, 51, 60, 70, 99, 108, 118, 148, 157, 166, 175]], [276, 48, [79, 88]]] },
  { head: [[6, 234, [9]], [283, 53, [6]], [28, 18, [18]]], box: [28, 160], verse: range(33, 172, 9), rows: [
    [106, 50, [31]], [115, 50, [40, 52, 61, 88, 100, 109]], [125, 46, [70, 79]],
    [183, 50, [31]], [190, 50, [40, 79]], [196, 46, [52, 61, 70, 88, 100, 109, 118]],
    [262, 52, [31]], [268, 52, [40, 171]], [276, 46, [49, 72, 97, 124, 147]], [286, 48, [55, 64, 82, 89, 106, 115, 131, 139, 157, 165]]] },
  { head: [[6, 240, [9]], [283, 53, [6]], [28, 42, [18]]], box: [28, 160], verse: range(33, 170, 9), rows: [
    [106, 50, [31]], [117, 50, [40, 157, 166]], [126, 48, [51, 99, 136]], [133, 46, [60, 70, 79, 88, 108, 118, 127, 148]],
    [185, 50, [31]], [193, 50, [40, 70, 108, 118]], [203, 46, [51, 60, 79, 88, 99]],
    [262, 50, [31]], [268, 50, [40, 51]], [276, 48, [60, 70]]] }
];

const strokes = (blocks, color) => blocks.map(([x, w, ys]) =>
  ys.map((y, n) => `<path d="M${x} ${y}h${w}" stroke="${color}" stroke-width="4" stroke-dasharray="5 4 9 2 12 3" stroke-dashoffset="${n % 3 ? 0 : n}"/>`).join('')).join('');

document.getElementById('thumbs').innerHTML = slides.map((s, i) => {
  let art = '';
  if (s.texts) art += s.texts.map(([x, y, size, color, text]) =>
    `<text x="${x}" y="${y}" font-size="${size}" font-weight="bold" text-anchor="middle" fill="${color}">${text}</text>`).join('');
  if (s.faint) art += strokes(s.faint, '#ececec');
  if (s.box) {
    art += strokes(s.head, '#7d7d8a');
    art += s.verse.map((y, n) => strokes([[13, n % 4 === 3 ? 48 : 66, [y]]], '#8f8f98')).join('');
    art += strokes(s.rows, '#888893');
    art += `<rect x="8" y="${s.box[0]}" width="90" height="${s.box[1]}" rx="16" fill="none" stroke="#111" stroke-width="3"/>`;
  }
  return `<li${s.on ? ' class="on"' : ''}><span class="num">${i + 1}</span><div class="thumb"><svg viewBox="0 0 342 195">${art}</svg></div></li>`;
}).join('');
```
